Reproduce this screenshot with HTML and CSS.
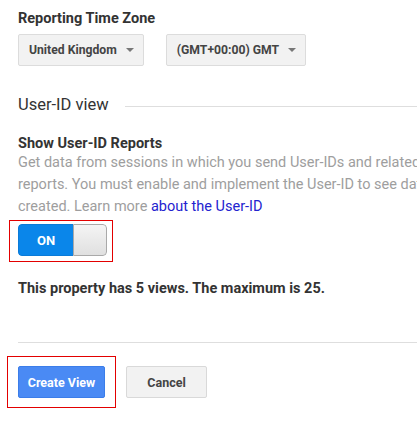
FILE: index.html
```html
<!DOCTYPE html>
<html>
<head>
<meta charset="utf-8">
<link rel="stylesheet" href="styles.css">
</head>
<body>
<div class="page">
  <div class="field">
    <div class="field-label">Reporting Time Zone</div>
    <div class="selects">
      <div class="select">United Kingdom<span class="caret"></span></div>
      <div class="select">(GMT+00:00) GMT<span class="caret"></span></div>
    </div>
  </div>

  <div class="section-head">
    <span class="section-title">User-ID view</span>
    <span class="section-rule"></span>
  </div>

  <div class="option">
    <div class="option-title">Show User-ID Reports</div>
    <p class="option-desc">Get data from sessions in which you send User-IDs and related data to User-ID<br>reports. You must enable and implement the User-ID to see data once the view is<br>created. Learn more <a class="link" href="#">about the User-ID</a></p>
    <div class="mark mark-toggle">
      <div class="toggle">
        <span class="toggle-on">ON</span>
        <span class="toggle-knob"></span>
      </div>
    </div>
  </div>

  <p class="note">This property has 5 views. The maximum is 25.</p>

  <div class="rule"></div>

  <div class="actions">
    <div class="mark mark-button">
      <button class="btn btn-primary">Create View</button>
    </div>
    <button class="btn btn-default">Cancel</button>
  </div>
</div>
</body>
</html>
```

FILE: styles.css
```css
html, body {
  margin: 0;
  padding: 0;
  background: #fff;
  overflow: hidden;
}

body {
  font-family: Roboto, "Liberation Sans", Arial, sans-serif;
  color: #333;
}

.page {
  width: 480px;
  padding: 9px 0 0 18px;
}

.field-label {
  font-size: 14.5px;
  font-weight: 700;
  line-height: 20px;
  color: #333;
}

.selects {
  display: flex;
  gap: 22px;
  margin-top: 5px;
}

.select {
  display: flex;
  align-items: center;
  height: 30px;
  padding: 0 9px 0 10px;
  background: #f2f2f2;
  border: 1px solid #dcdcdc;
  border-radius: 2px;
  font-size: 12.2px;
  font-weight: 700;
  color: #444;
  white-space: nowrap;
}

.caret {
  width: 0;
  height: 0;
  margin-left: 9px;
  border-left: 4px solid transparent;
  border-right: 4px solid transparent;
  border-top: 4px solid #777;
}

.section-head {
  display: flex;
  align-items: center;
  gap: 16px;
  margin-top: 27px;
  height: 24px;
}

.section-title {
  font-size: 16.5px;
  font-weight: 400;
  color: #333;
  line-height: 24px;
  white-space: nowrap;
}

.section-rule {
  flex: 1;
  height: 1px;
  background: #dedede;
  margin-top: 2px;
}

.option {
  margin-top: 19px;
}

.option-title {
  font-size: 14.5px;
  font-weight: 700;
  line-height: 16px;
  color: #333;
}

.option-desc {
  margin: 0;
  font-size: 14.5px;
  line-height: 22px;
  color: #9e9e9e;
  white-space: nowrap;
}

.link {
  color: #2323cf;
  text-decoration: none;
}

.mark {
  display: inline-block;
  border: 1px solid #e30000;
}

.mark-toggle {
  margin: 2px 0 0 -9px;
  padding: 3px 5px 5px 8px;
}

.toggle {
  display: flex;
  width: 89px;
  height: 32px;
  border-radius: 4px;
  overflow: hidden;
}

.toggle-on {
  width: 55px;
  display: flex;
  align-items: center;
  justify-content: center;
  background: #0a86ea;
  border: 1px solid #0b7bd8;
  border-right: none;
  border-radius: 4px 0 0 4px;
  color: #fff;
  font-size: 13px;
  font-weight: 700;
  box-sizing: border-box;
}

.toggle-knob {
  flex: 1;
  background: linear-gradient(#f4f4f4, #e0e0e0);
  border: 1px solid #a9a9a9;
  border-radius: 0 4px 4px 0;
}

.note {
  margin: 17px 0 0;
  font-size: 14.5px;
  font-weight: 700;
  line-height: 20px;
  color: #333;
}

.rule {
  height: 1px;
  background: #dedede;
  margin-top: 43px;
}

.actions {
  display: flex;
  align-items: center;
  gap: 10px;
  margin-top: 13px;
  margin-left: -11px;
}

.mark-button {
  padding: 9px 10px 9px 10px;
}

.btn {
  display: block;
  height: 32px;
  box-sizing: border-box;
  border-radius: 2px;
  font-family: Roboto, "Liberation Sans", Arial, sans-serif;
  font-size: 12.5px;
  font-weight: 700;
  padding: 0;
  white-space: nowrap;
}

.btn-primary {
  width: 87px;
  background: #4a8af4;
  border: 1px solid #3b7de9;
  color: #fff;
}

.btn-default {
  width: 81px;
  background: #f2f2f2;
  border: 1px solid #d9d9d9;
  color: #444;
}
```
